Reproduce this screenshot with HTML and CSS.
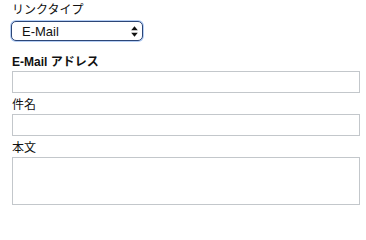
FILE: index.html
```
<!DOCTYPE html>
<html lang="ja">
<head>
<meta charset="utf-8">
<title>リンク</title>
<link rel="stylesheet" href="styles.css">
</head>
<body>
<form class="form">
  <label class="label" for="type">リンクタイプ</label>
  <div class="select-wrap">
    <select id="type" class="select">
      <option>E-Mail</option>
    </select>
    <svg class="select-arrows" width="7" height="11" viewBox="0 0 7 11"><path d="M3.5 0.3 L6.8 4.3 L0.2 4.3 Z M3.5 10.7 L6.8 6.7 L0.2 6.7 Z" fill="#111"/></svg>
  </div>
  <label class="label label-bold" for="mail">E-Mail アドレス</label>
  <input id="mail" class="field" type="text">
  <label class="label" for="subject">件名</label>
  <input id="subject" class="field" type="text">
  <label class="label" for="body">本文</label>
  <textarea id="body" class="field area"></textarea>
</form>
</body>
</html>
```
FILE: styles.css
```
html, body {
  margin: 0;
  padding: 0;
  background: #ffffff;
}
body {
  font-family: "Liberation Sans", "Noto Sans CJK JP", sans-serif;
  font-size: 12px;
  color: #111;
}
.form {
  display: flex;
  flex-direction: column;
  align-items: flex-start;
  padding: 3px 7px 0 12px;
}
.label {
  display: block;
  line-height: 15px;
  height: 15px;
  margin-top: 5px;
}
.label:first-child {
  margin-top: 0;
}
.label-bold {
  font-weight: bold;
  margin-top: 14px;
}
.select-wrap {
  position: relative;
  margin-top: 3px;
  margin-left: -1px;
}
.select {
  -webkit-appearance: none;
  appearance: none;
  display: block;
  width: 132px;
  height: 20px;
  box-sizing: border-box;
  margin: 0;
  padding: 0 20px 0 10px;
  border: 1px solid #2c4677;
  border-radius: 5px;
  background: #fff;
  box-shadow: 0 0 0 1px rgba(110, 160, 235, 0.5);
  font-family: "Liberation Sans", sans-serif;
  font-size: 13px;
  color: #111;
  outline: none;
}
.select-arrows {
  position: absolute;
  right: 5px;
  top: 4.5px;
}
.field {
  display: block;
  box-sizing: border-box;
  width: 348px;
  height: 22px;
  margin: 1px 0 0 0;
  padding: 2px 4px;
  border: 1px solid #c3c7cb;
  border-radius: 0;
  background: #fff;
  font-family: "Liberation Sans", sans-serif;
  font-size: 12px;
  outline: none;
}
.area {
  height: 48px;
  resize: none;
}
```
